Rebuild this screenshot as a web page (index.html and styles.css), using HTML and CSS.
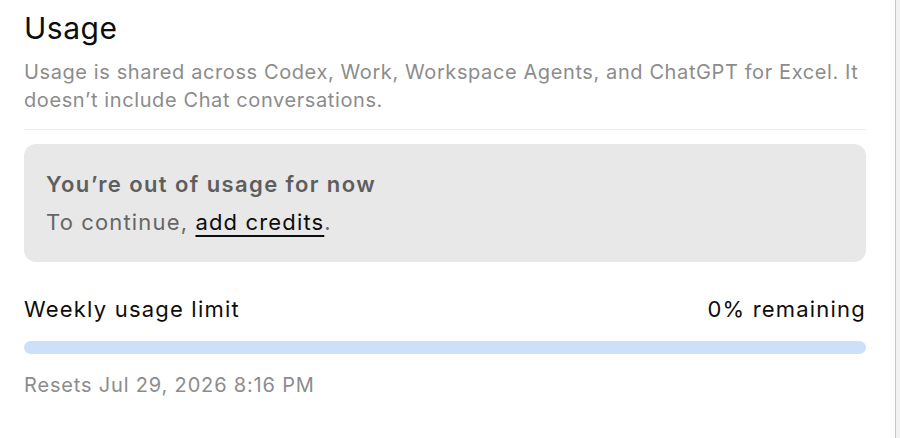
FILE: index.html
```html
<!DOCTYPE html>
<html lang="en">
  <head>
    <meta charset="UTF-8" />
    <title>Usage</title>
    <link rel="stylesheet" href="styles.css">
  </head>
  <body>
    <div class="page">
      <div class="content">
        <h1 class="title">Usage</h1>
        <p class="desc">Usage is shared across Codex, Work, Workspace Agents, and ChatGPT for Excel. It doesn’t include Chat conversations.</p>
        <hr class="divider" />
        <div class="notice">
          <div class="notice-title">You’re out of usage for now</div>
          <div class="notice-text">To continue, <a href="#" class="link">add credits</a>.</div>
        </div>
        <div class="limit">
          <div class="limit-row">
            <span>Weekly usage limit</span>
            <span>0% remaining</span>
          </div>
          <div class="bar"><div class="bar-fill" style="width: 0%"></div></div>
          <div class="resets">Resets Jul 29, 2026 8:16 PM</div>
        </div>
      </div>
      <div class="edge"></div>
    </div>
  </body>
</html>
```

FILE: styles.css
```css
body {
  margin: 0;
  font-family: Inter, "Noto Sans", sans-serif;
  background: #fff;
  color: #0d0d0d;
}
.page {
  display: flex;
  height: 438px;
  overflow: hidden;
}
.content {
  flex: 1;
  padding: 10px 29px 0 24px;
}
.edge {
  width: 4px;
  border-left: 1px solid #c9c9c9;
  background: #f2f2f2;
}
.title {
  margin: 0;
  font-size: 30px;
  font-weight: 400;
  line-height: 36px;
  letter-spacing: 0.5px;
}
.desc {
  margin: 12px 0 0;
  font-size: 20px;
  line-height: 28px;
  color: #8c8c8c;
  letter-spacing: 0.6px;
}
.divider {
  border: 0;
  border-top: 1px solid #ececec;
  margin: 15px 0 14px;
}
.notice {
  background: #e8e8e8;
  border-radius: 12px;
  padding: 26px 22px;
}
.notice-title {
  font-size: 22px;
  font-weight: 600;
  color: #5e5e5e;
  line-height: 28px;
  letter-spacing: 1.4px;
}
.notice-text {
  margin-top: 10px;
  font-size: 22px;
  color: #666;
  line-height: 28px;
  letter-spacing: 1.15px;
}
.link {
  color: #0d0d0d;
  text-decoration: underline;
  text-underline-offset: 5px;
  text-decoration-thickness: 2px;
}
.limit {
  margin-top: 33px;
}
.limit-row {
  display: flex;
  justify-content: space-between;
  font-size: 22px;
  line-height: 28px;
  letter-spacing: 1.2px;
}
.bar {
  margin-top: 18px;
  height: 13px;
  border-radius: 7px;
  background: #cce0fb;
  overflow: hidden;
}
.bar-fill {
  height: 100%;
  background: #3b82f6;
}
.resets {
  margin-top: 19px;
  font-size: 20px;
  line-height: 24px;
  color: #8c8c8c;
  letter-spacing: 0.83px;
}
```
